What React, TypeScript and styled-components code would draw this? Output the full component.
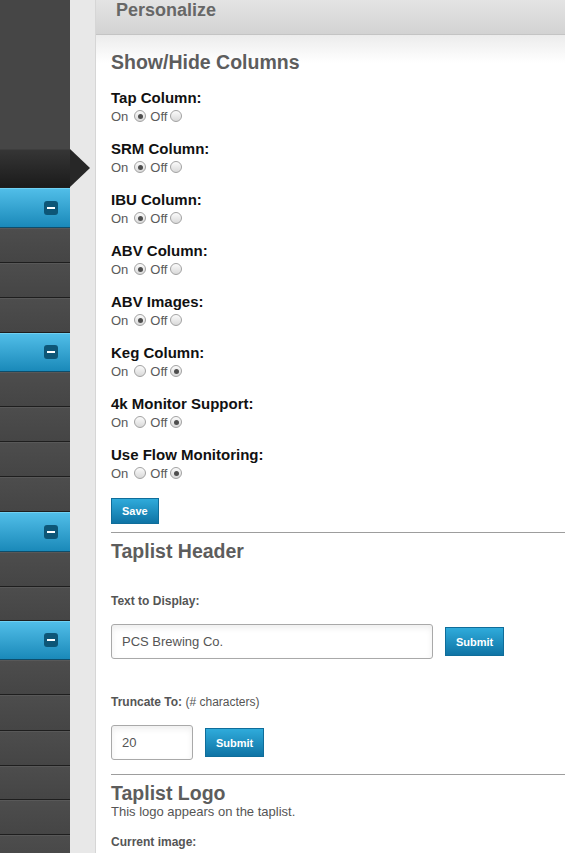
import React from "react";
import styled, { createGlobalStyle } from "styled-components";

const GlobalStyle = createGlobalStyle`
  html, body {
    margin: 0;
    padding: 0;
    overflow: hidden;
    font-family: "Liberation Sans", Arial, sans-serif;
  }
  * {
    box-sizing: border-box;
  }
`;

const Page = styled.div`
  display: flex;
  height: 100vh;
  overflow: hidden;
  background: #e8e8e8;
`;

const Sidebar = styled.nav`
  width: 70px;
  flex-shrink: 0;
  display: flex;
  flex-direction: column;
  background: #444;
`;

const SideTop = styled.div`
  height: 149px;
  flex-shrink: 0;
  background: #464646;
`;

const SideItem = styled.div<{ $kind: "active" | "blue" | "gray"; $h: number }>`
  position: relative;
  height: ${({ $h }) => $h}px;
  flex-shrink: 0;
  display: flex;
  align-items: center;
  justify-content: flex-end;
  padding-right: 12px;
  background: ${({ $kind }) =>
    $kind === "active"
      ? "linear-gradient(#363636, #1b1b1b)"
      : $kind === "blue"
      ? "linear-gradient(#52bfe9, #1a89b9)"
      : "linear-gradient(#4d4d4d, #454545)"};
  border-bottom: 1px solid
    ${({ $kind }) => ($kind === "blue" ? "#0e4d6b" : "#1e1e1e")};
  box-shadow: inset 0 1px 0
    ${({ $kind }) =>
      $kind === "blue" ? "#6fd0f2" : $kind === "active" ? "#3e3e3e" : "#585858"};

  ${({ $kind }) =>
    $kind === "active" &&
    `
    &::after {
      content: "";
      position: absolute;
      right: -20px;
      top: 0;
      border-top: 19.5px solid transparent;
      border-bottom: 19.5px solid transparent;
      border-left: 20px solid #272727;
    }
  `}
`;

const Minus = styled.span`
  width: 14px;
  height: 14px;
  border-radius: 3px;
  background: #0d5677;
  display: flex;
  align-items: center;
  justify-content: center;

  &::before {
    content: "";
    width: 8px;
    height: 2px;
    background: #fff;
  }
`;

const Main = styled.main`
  flex: 1;
  margin-left: 25px;
  background: #fff;
  border-left: 1px solid #d6d6d6;
  display: flex;
  flex-direction: column;
`;

const PanelHeader = styled.div`
  height: 35px;
  flex-shrink: 0;
  padding: 0 20px;
  background: linear-gradient(#e4e4e4, #d3d3d3);
  border-bottom: 1px solid #c4c4c4;
  color: #676767;
  font-size: 18px;
  font-weight: bold;
`;

const Content = styled.div`
  padding: 16px 0 0 15px;
  background: linear-gradient(#ececec, #fff 28px);
`;

const SectionTitle = styled.h2<{ $mb?: number }>`
  margin: 0 0 ${({ $mb }) => $mb ?? 0}px;
  font-size: 19.5px;
  line-height: 22px;
  font-weight: bold;
  color: #5d5d5d;
`;

const OptionList = styled.div`
  display: flex;
  flex-direction: column;
  gap: 15px;
`;

const Option = styled.div`
  display: flex;
  flex-direction: column;
`;

const OptionLabel = styled.div`
  font-size: 15px;
  line-height: 18px;
  font-weight: bold;
  color: #111;
`;

const RadioRow = styled.div`
  display: flex;
  align-items: center;
  height: 18px;
  font-size: 13px;
  color: #5a5a5a;
`;

const Radio = styled.input.attrs({ type: "radio" })<{ $ml?: number }>`
  appearance: none;
  width: 12px;
  height: 12px;
  margin: 0 4px 0 ${({ $ml }) => $ml ?? 6}px;
  border: 1px solid #a2a2a2;
  border-radius: 50%;
  background: linear-gradient(#fbfbfb, #d9d9d9);
  position: relative;

  &:checked::after {
    content: "";
    position: absolute;
    top: 2.5px;
    left: 2.5px;
    width: 5px;
    height: 5px;
    border-radius: 50%;
    background: #4e4e4e;
  }
`;

const Button = styled.button<{ $h: number }>`
  height: ${({ $h }) => $h}px;
  padding: 0 10px;
  border: 1px solid #0f6d9a;
  border-radius: 0;
  background: linear-gradient(#2fabdb, #0f74a5);
  color: #fff;
  font-family: inherit;
  font-size: 11px;
  font-weight: bold;
  cursor: pointer;
`;

const SaveRow = styled.div`
  margin-top: 16px;
`;

const Rule = styled.hr<{ $mt: number }>`
  margin: ${({ $mt }) => $mt}px 0 7px;
  border: 0;
  border-top: 1px solid #9d9d9d;
`;

const FieldLabel = styled.div<{ $mt: number }>`
  margin-top: ${({ $mt }) => $mt}px;
  font-size: 12px;
  line-height: 14px;
  color: #555;

  b {
    font-weight: bold;
  }
`;

const FieldRow = styled.div`
  display: flex;
  align-items: center;
  gap: 12px;
  margin-top: 16px;
`;

const TextInput = styled.input<{ $w: number }>`
  width: ${({ $w }) => $w}px;
  height: 35px;
  padding: 0 10px;
  border: 1px solid #a9a9a9;
  border-radius: 3px;
  box-shadow: inset 0 3px 6px rgba(0, 0, 0, 0.07);
  font-family: inherit;
  font-size: 13px;
  color: #555;
  outline: none;
`;

const Note = styled.div`
  font-size: 13px;
  line-height: 16px;
  color: #555;
`;

const options: { label: string; on: boolean }[] = [
  { label: "Tap Column:", on: true },
  { label: "SRM Column:", on: true },
  { label: "IBU Column:", on: true },
  { label: "ABV Column:", on: true },
  { label: "ABV Images:", on: true },
  { label: "Keg Column:", on: false },
  { label: "4k Monitor Support:", on: false },
  { label: "Use Flow Monitoring:", on: false },
];

const nav: { kind: "active" | "blue" | "gray"; h: number }[] = [
  { kind: "active", h: 39 },
  { kind: "blue", h: 40 },
  { kind: "gray", h: 35 },
  { kind: "gray", h: 35 },
  { kind: "gray", h: 35 },
  { kind: "blue", h: 39 },
  { kind: "gray", h: 35 },
  { kind: "gray", h: 35 },
  { kind: "gray", h: 35 },
  { kind: "gray", h: 35 },
  { kind: "blue", h: 40 },
  { kind: "gray", h: 35 },
  { kind: "gray", h: 34 },
  { kind: "blue", h: 39 },
  { kind: "gray", h: 35 },
  { kind: "gray", h: 36 },
  { kind: "gray", h: 35 },
  { kind: "gray", h: 34 },
  { kind: "gray", h: 35 },
  { kind: "gray", h: 35 },
];

const App = () => {
  return (
    <>
      <GlobalStyle />
      <Page>
        <Sidebar>
          <SideTop />
          {nav.map((item, i) => (
            <SideItem key={i} $kind={item.kind} $h={item.h}>
              {item.kind === "blue" && <Minus />}
            </SideItem>
          ))}
        </Sidebar>

        <Main>
          <PanelHeader>Personalize</PanelHeader>
          <Content>
            <SectionTitle $mb={16}>Show/Hide Columns</SectionTitle>
            <OptionList>
              {options.map((opt, i) => (
                <Option key={opt.label}>
                  <OptionLabel>{opt.label}</OptionLabel>
                  <RadioRow>
                    On
                    <Radio name={`opt${i}`} defaultChecked={opt.on} />
                    Off
                    <Radio name={`opt${i}`} defaultChecked={!opt.on} $ml={3} />
                  </RadioRow>
                </Option>
              ))}
            </OptionList>
            <SaveRow>
              <Button $h={26}>Save</Button>
            </SaveRow>

            <Rule $mt={8} />
            <SectionTitle>Taplist Header</SectionTitle>
            <FieldLabel $mt={32}>
              <b>Text to Display:</b>
            </FieldLabel>
            <FieldRow>
              <TextInput $w={322} defaultValue="PCS Brewing Co." readOnly />
              <Button $h={29}>Submit</Button>
            </FieldRow>
            <FieldLabel $mt={36}>
              <b>Truncate To:</b> (# characters)
            </FieldLabel>
            <FieldRow>
              <TextInput $w={82} defaultValue="20" readOnly />
              <Button $h={29}>Submit</Button>
            </FieldRow>

            <Rule $mt={14} />
            <SectionTitle>Taplist Logo</SectionTitle>
            <Note>This logo appears on the taplist.</Note>
            <FieldLabel $mt={15}>
              <b>Current image:</b>
            </FieldLabel>
          </Content>
        </Main>
      </Page>
    </>
  );
};

export default App;
